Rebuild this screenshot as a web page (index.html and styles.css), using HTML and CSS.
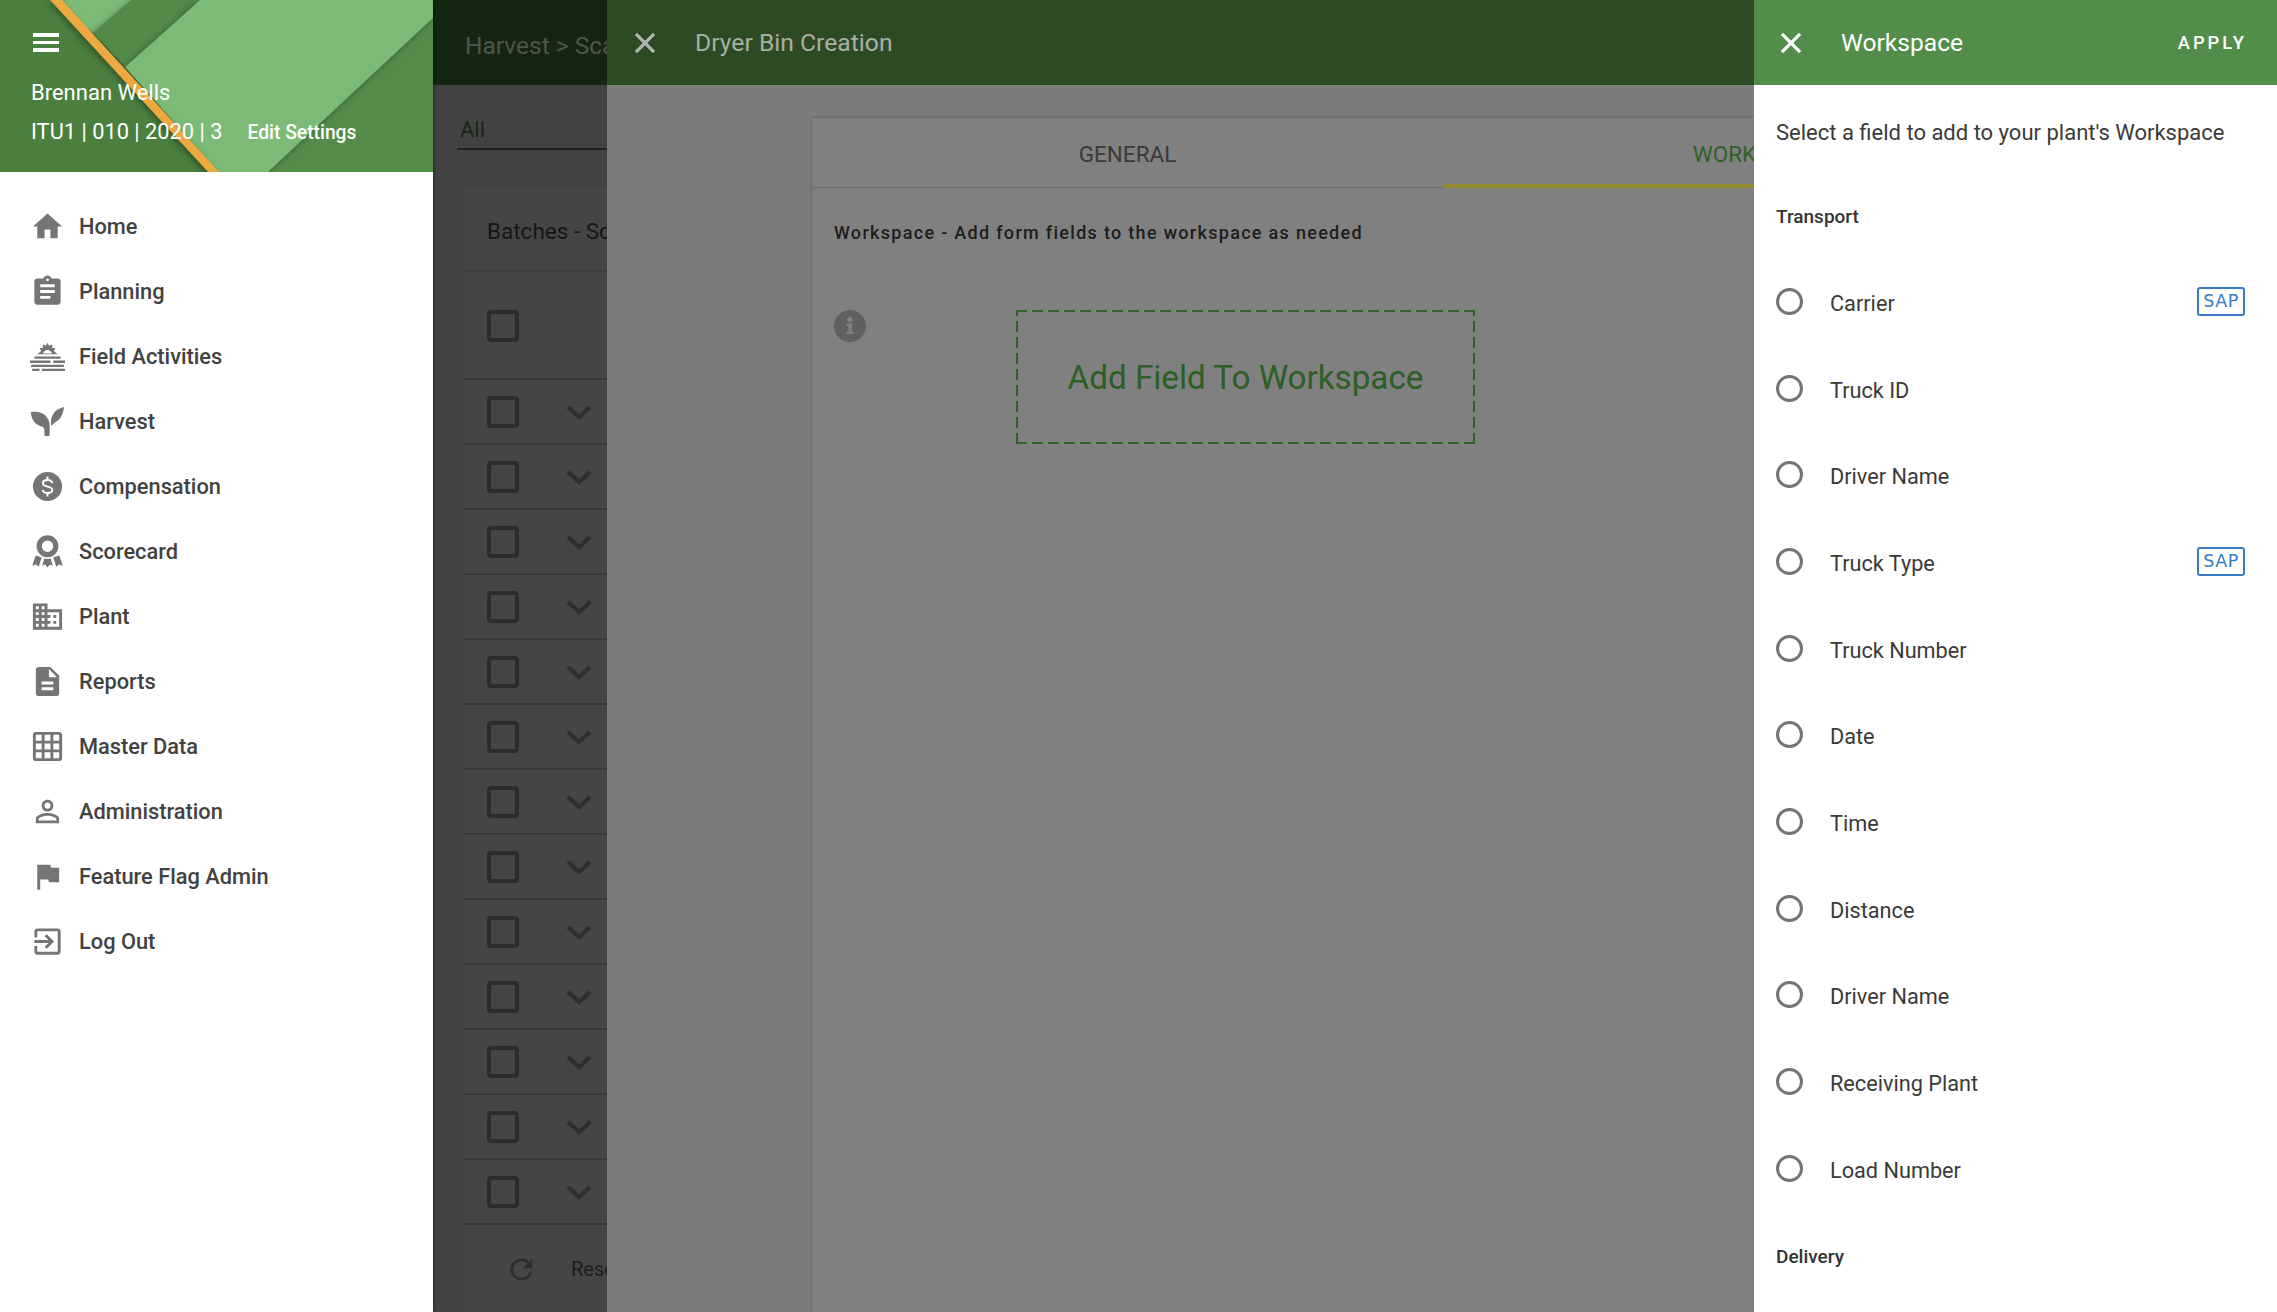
FILE: index.html
```html
<!DOCTYPE html>
<html lang="en">
<head>
<meta charset="utf-8">
<title>Dryer Bin Creation</title>
<link rel="stylesheet" href="styles.css">
</head>
<body>
<svg class="defs" width="0" height="0" aria-hidden="true">
  <symbol id="chev" viewBox="0 0 26 16"><path d="M2 3l11 10L24 3" fill="none" stroke="currentColor" stroke-width="4.200"/></symbol>
  <symbol id="close" viewBox="0 0 24 24"><path d="M19 6.410L17.590 5 12 10.590 6.410 5 5 6.410 10.590 12 5 17.590 6.410 19 12 13.410 17.590 19 19 17.590 13.410 12z" stroke="currentColor" stroke-width=".4"/></symbol>
</svg>
<div class="app">
  <aside class="sidebar">
    <header class="profile">
      <svg class="profile-art" viewBox="0 0 433 172" preserveAspectRatio="none" aria-hidden="true">
        <rect width="433" height="172" fill="#4a7f3e"/>
        <polygon points="433,18 433,172 268,172" fill="#538c48" class="shade"/>
        <polygon points="55,0 132,0 93,33" fill="#7cbb76"/>
        <polygon points="132,0 200,0 125,67 93,33" fill="#528a47" class="shade"/>
        <polygon points="200,0 433,0 433,18 268,172 218,172 125,67" fill="#7cbb76" class="shade"/>
        <polygon points="50,0 62,0 219,172 208,172" fill="#eda83f" class="shade"/>
      </svg>
      <button class="menu" type="button" aria-label="Menu"><span></span><span></span><span></span></button>
      <div class="user">Brennan Wells</div>
      <div class="plant-line"><span>ITU1 | 010 | 2020 | 3</span><a class="edit">Edit Settings</a></div>
    </header>
    <nav class="nav">
      <a class="nav-item"><svg class="ico" viewBox="0 0 24 24"><path d="M10 20v-6h4v6h5v-8h3L12 3 2 12h3v8z"/></svg>Home</a>
      <a class="nav-item"><svg class="ico" viewBox="0 0 24 24"><path d="M19 3h-4.180C14.400 1.840 13.300 1 12 1c-1.300 0-2.400.84-2.820 2H5c-1.100 0-2 .9-2 2v14c0 1.100.9 2 2 2h14c1.100 0 2-.9 2-2V5c0-1.100-.9-2-2-2zm-7 0c.55 0 1 .45 1 1s-.45 1-1 1-1-.45-1-1 .45-1 1-1zm2 14H7v-2h7v2zm3-4H7v-2h10v2zm0-4H7V7h10v2z"/></svg>Planning</a>
      <a class="nav-item"><svg class="ico" viewBox="0 0 24 24"><path d="M12 2.500l1 2.200 2.300-1-.2 2.400 2.400.1-1.200 2.100 2.700 2.200H5l2.700-2.200-1.200-2.100 2.400-.1-.2-2.400 2.300 1zM8.900 10h6.200c-.4-1.500-1.600-2.500-3.100-2.500S9.300 8.500 8.900 10z" fill-rule="evenodd"/><path d="M3 12h18v1.600H3zM0 14.800h14v1.600H0zM16 14.800h8v1.600h-8zM.8 17.600h22.400v1.600H.8zM1.500 20.400h5V22h-5zM8 20.400h16V22H8z"/></svg>Field Activities</a>
      <a class="nav-item"><svg class="ico" viewBox="0 0 24 24"><path d="M.5 5.500C5 5 9.500 6 11.500 9c1.500 2 2 4 2 6v6c0 .6-.4 1-1 1h-1.600c-.6 0-1-.4-1-1v-3c0-2-1.400-2.500-3-3C3 14 1 10 .5 5.500z"/><path d="M23.300 2c-.4 4.500-2 7.500-4.500 9.500-1.500 1.200-3 2-4.300 3.500-.3-2.500-.2-5 1-7.500C17 4.500 20 2.800 23.300 2z"/></svg>Harvest</a>
      <a class="nav-item"><svg class="ico" viewBox="0 0 24 24"><circle cx="12" cy="12" r="10"/><path d="M15.300 9.700c-.3-1.400-1.500-2.200-3.300-2.200-1.900 0-3.200 1-3.200 2.300 0 3.100 6.500 1.500 6.500 4.500 0 1.300-1.400 2.200-3.300 2.200-1.800 0-3-.8-3.300-2.200M12 5.200v2.300M12 16.500v2.300" fill="none" stroke="#fff" stroke-width="1.300"/></svg>Compensation</a>
      <a class="nav-item"><svg class="ico" viewBox="0 0 24 24"><circle cx="12" cy="8.400" r="5.700" fill="none" stroke="#757575" stroke-width="3.600"/><path d="M8 16l-2 6.500-1.900-1.600-2.600.8 2.400-7zM16 16l2 6.500 1.900-1.600 2.600.8-2.400-7zM9.800 16.800c1.400.4 3 .4 4.400 0l1.400 5-2-.9-1.600 2.100-1.600-2.100-2 .9z"/></svg>Scorecard</a>
      <a class="nav-item"><svg class="ico" viewBox="0 0 24 24"><path d="M12 7V3H2v18h20V7H12zM6 19H4v-2h2v2zm0-4H4v-2h2v2zm0-4H4V9h2v2zm0-4H4V5h2v2zm4 12H8v-2h2v2zm0-4H8v-2h2v2zm0-4H8V9h2v2zm0-4H8V5h2v2zm10 12h-8v-2h2v-2h-2v-2h2v-2h-2V9h8v10zm-2-8h-2v2h2v-2zm0 4h-2v2h2v-2z"/></svg>Plant</a>
      <a class="nav-item"><svg class="ico" viewBox="0 0 24 24"><path d="M14 2H6c-1.100 0-1.990.9-1.990 2L4 20c0 1.100.89 2 1.990 2H18c1.100 0 2-.9 2-2V8l-6-6zm2 16H8v-2h8v2zm0-4H8v-2h8v2zm-3-5V3.500L18.500 9H13z"/></svg>Reports</a>
      <a class="nav-item"><svg class="ico" viewBox="0 0 24 24"><path d="M20 2H4c-1.100 0-2 .9-2 2v16c0 1.100.9 2 2 2h16c1.100 0 2-.9 2-2V4c0-1.100-.9-2-2-2zM8 20H4v-4h4v4zm0-6H4v-4h4v4zm0-6H4V4h4v4zm6 12h-4v-4h4v4zm0-6h-4v-4h4v4zm0-6h-4V4h4v4zm6 12h-4v-4h4v4zm0-6h-4v-4h4v4zm0-6h-4V4h4v4z"/></svg>Master Data</a>
      <a class="nav-item"><svg class="ico" viewBox="0 0 24 24"><path d="M12 5.900c1.160 0 2.100.94 2.100 2.100s-.94 2.100-2.100 2.100S9.900 9.160 9.900 8s.94-2.100 2.100-2.100m0 9c2.970 0 6.100 1.460 6.100 2.100v1.100H5.900V17c0-.64 3.130-2.100 6.100-2.100M12 4C9.790 4 8 5.790 8 8s1.790 4 4 4 4-1.790 4-4-1.790-4-4-4zm0 9c-2.670 0-8 1.340-8 4v3h16v-3c0-2.660-5.330-4-8-4z"/></svg>Administration</a>
      <a class="nav-item"><svg class="ico" viewBox="0 0 24 24"><path d="M14.400 6L14 4H5v17h2v-7h5.600l.4 2h7V6z"/></svg>Feature Flag Admin</a>
      <a class="nav-item"><svg class="ico" viewBox="0 0 24 24"><path d="M10.090 15.590L11.500 17l5-5-5-5-1.410 1.410L12.670 11H3v2h9.670l-2.580 2.590zM19 3H5c-1.110 0-2 .9-2 2v4h2V5h14v14H5v-4H3v4c0 1.100.89 2 2 2h14c1.100 0 2-.9 2-2V5c0-1.100-.9-2-2-2z"/></svg>Log Out</a>
    </nav>
  </aside>

  <main class="page">
    <div class="page-bar">Harvest &gt; Scale Tickets</div>
    <div class="filter">All</div>
    <section class="batches">
      <h2 class="batches-title">Batches - Scale Tickets</h2>
      <div class="row row-head"><span class="check"></span></div>
      <div class="row"><span class="check"></span><svg class="chev"><use href="#chev"/></svg></div>
      <div class="row"><span class="check"></span><svg class="chev"><use href="#chev"/></svg></div>
      <div class="row"><span class="check"></span><svg class="chev"><use href="#chev"/></svg></div>
      <div class="row"><span class="check"></span><svg class="chev"><use href="#chev"/></svg></div>
      <div class="row"><span class="check"></span><svg class="chev"><use href="#chev"/></svg></div>
      <div class="row"><span class="check"></span><svg class="chev"><use href="#chev"/></svg></div>
      <div class="row"><span class="check"></span><svg class="chev"><use href="#chev"/></svg></div>
      <div class="row"><span class="check"></span><svg class="chev"><use href="#chev"/></svg></div>
      <div class="row"><span class="check"></span><svg class="chev"><use href="#chev"/></svg></div>
      <div class="row"><span class="check"></span><svg class="chev"><use href="#chev"/></svg></div>
      <div class="row"><span class="check"></span><svg class="chev"><use href="#chev"/></svg></div>
      <div class="row"><span class="check"></span><svg class="chev"><use href="#chev"/></svg></div>
      <div class="row"><span class="check"></span><svg class="chev"><use href="#chev"/></svg></div>
      <div class="reset">
        <svg class="reset-ico" viewBox="0 0 24 24"><path d="M17.650 6.350A7.958 7.958 0 0 0 12 4c-4.420 0-7.990 3.580-7.990 8s3.570 8 7.990 8c3.730 0 6.840-2.550 7.730-6h-2.080A5.990 5.990 0 0 1 12 18c-3.310 0-6-2.690-6-6s2.690-6 6-6c1.660 0 3.140.69 4.220 1.780L13 11h7V4l-2.350 2.350z"/></svg>
        <span>Reset</span>
      </div>
    </section>
  </main>

  <section class="modal">
    <header class="modal-bar">
      <svg class="close close-dim"><use href="#close"/></svg>
      <span>Dryer Bin Creation</span>
    </header>
    <div class="card">
      <div class="tabs">
        <div class="tab">GENERAL</div>
        <div class="tab tab-active">WORKSPACE</div>
      </div>
      <p class="card-desc">Workspace - Add form fields to the workspace as needed</p>
      <div class="card-body">
        <svg class="info" viewBox="0 0 32 32"><circle cx="16" cy="16" r="16" fill="#606060"/><circle cx="16" cy="9.500" r="2.500" fill="#808080"/><path d="M12.500 13.500h5.500v8h2v2.500h-7.500v-2.500h2v-5.500h-2z" fill="#808080"/></svg>
        <div class="dropzone">Add Field To Workspace</div>
      </div>
    </div>
  </section>

  <aside class="panel">
    <header class="panel-bar">
      <svg class="close"><use href="#close"/></svg>
      <span class="panel-title">Workspace</span>
      <span class="apply">APPLY</span>
    </header>
    <div class="panel-body">
      <p class="panel-intro">Select a field to add to your plant's Workspace</p>
      <h3 class="group">Transport</h3>
      <div class="field"><span class="radio"></span><span class="field-name">Carrier</span><span class="sap">SAP</span></div>
      <div class="field"><span class="radio"></span><span class="field-name">Truck ID</span></div>
      <div class="field"><span class="radio"></span><span class="field-name">Driver Name</span></div>
      <div class="field"><span class="radio"></span><span class="field-name">Truck Type</span><span class="sap">SAP</span></div>
      <div class="field"><span class="radio"></span><span class="field-name">Truck Number</span></div>
      <div class="field"><span class="radio"></span><span class="field-name">Date</span></div>
      <div class="field"><span class="radio"></span><span class="field-name">Time</span></div>
      <div class="field"><span class="radio"></span><span class="field-name">Distance</span></div>
      <div class="field"><span class="radio"></span><span class="field-name">Driver Name</span></div>
      <div class="field"><span class="radio"></span><span class="field-name">Receiving Plant</span></div>
      <div class="field"><span class="radio"></span><span class="field-name">Load Number</span></div>
      <h3 class="group group-next">Delivery</h3>
    </div>
  </aside>
</div>
</body>
</html>
```
FILE: styles.css
```css
* { box-sizing: border-box; }
html, body { margin: 0; height: 100%; }
body {
  font-family: Roboto, "Liberation Sans", sans-serif;
  overflow: hidden;
  background: #fff;
}
.defs { position: absolute; }
.app {
  display: flex;
  width: 2277px;
  height: 1312px;
  overflow: hidden;
}

/* Sidebar */
.sidebar {
  flex: 0 0 433px;
  background: #fff;
  box-shadow: 1px 0 3px rgba(0,0,0,.4);
  z-index: 2;
}
.profile {
  position: relative;
  height: 172px;
  padding: 33px 0 0 31px;
  color: #fff;
  overflow: hidden;
}
.profile-art { position: absolute; left: 0; top: 0; width: 100%; height: 100%; }
.shade { filter: drop-shadow(-2px 2px 3px rgba(0,0,0,.35)); }
.menu {
  position: relative;
  display: flex;
  flex-direction: column;
  gap: 4px;
  width: 26px;
  padding: 0;
  margin: 0 0 0 2px;
  border: 0;
  background: none;
}
.menu span { display: block; height: 3.500px; background: #fff; }
.user {
  position: relative;
  margin-top: 27px;
  font-size: 22px;
  line-height: 28px;
}
.plant-line {
  position: relative;
  display: flex;
  align-items: baseline;
  gap: 25px;
  margin-top: 11px;
  font-size: 21.800px;
  line-height: 28px;
}
.edit { font-size: 19.300px; font-weight: 500; }
.nav { padding-top: 22px; }
.nav-item {
  display: flex;
  align-items: center;
  height: 65px;
  padding-left: 30px;
  gap: 14px;
  font-size: 21.800px;
  font-weight: 500;
  color: #424242;
}
.ico { flex: 0 0 35px; width: 35px; height: 35px; fill: #757575; }

/* Background page */
.page {
  flex: 0 0 174px;
  overflow: hidden;
  background: #424242;
}
.page-bar {
  display: flex;
  align-items: center;
  height: 85px;
  padding: 5px 0 0 32px;
  background: #14260f;
  font-size: 24.500px;
  color: #4c5749;
  white-space: nowrap;
}
.filter {
  width: 400px;
  height: 65px;
  margin-left: 24px;
  padding: 32px 0 0 3px;
  border-bottom: 2px solid #1a2418;
  font-size: 22px;
  line-height: 26px;
  color: #1a2617;
}
.batches {
  width: 800px;
  height: 1300px;
  margin: 37px 0 0 31px;
  background: #454545;
}
.batches-title {
  display: flex;
  align-items: center;
  height: 85px;
  margin: 0;
  padding: 4px 0 0 23px;
  font-size: 22.500px;
  font-weight: 400;
  color: #161616;
  border-bottom: 2px solid #3d3d3d;
  white-space: nowrap;
}
.row {
  display: flex;
  align-items: center;
  height: 65px;
  padding-left: 23px;
  gap: 47px;
  border-bottom: 2px solid #383838;
}
.row-head { height: 108px; padding-top: 2px; }
.check {
  flex: 0 0 32px;
  height: 32px;
  border: 4px solid #2c2c2c;
  border-radius: 4px;
}
.chev { width: 26px; height: 16px; color: #2e2e2e; }
.reset {
  display: flex;
  align-items: center;
  gap: 33px;
  height: 88px;
  padding-left: 41px;
  font-size: 20px;
  color: #1c1c1c;
}
.reset-ico { flex: 0 0 33px; width: 33px; height: 33px; fill: #2e2e2e; }

/* Modal */
.modal {
  flex: 0 0 1147px;
  overflow: hidden;
  background: #7c7c7c;
}
.modal-bar {
  display: flex;
  align-items: center;
  height: 85px;
  padding-left: 21px;
  gap: 33px;
  background: #2d4a24;
  font-size: 24.700px;
  color: #a8b0a5;
}
.close { width: 34px; height: 34px; fill: #fff; color: #fff; flex: 0 0 34px; }
.close-dim { fill: #b0b5ae; color: #b0b5ae; }
.card {
  width: 1262px;
  height: 1300px;
  margin: 33px 0 0 205px;
  background: #808080;
  box-shadow: 0 0 3px rgba(0,0,0,.3);
}
.tabs {
  display: flex;
  height: 70px;
  border-bottom: 1px solid #6d6d6d;
}
.tab {
  flex: 1;
  display: flex;
  align-items: center;
  justify-content: center;
  padding-top: 2px;
  font-size: 22.500px;
  color: #3a3a3a;
}
.tab-active {
  color: #2f6227;
  height: 70px;
  padding-top: 6px;
  border-bottom: 4px solid #948a2e;
}
.card-desc {
  margin: 34px 0 0 22px;
  font-size: 18px;
  font-weight: 500;
  line-height: 22px;
  letter-spacing: 1.300px;
  color: #1d1d1d;
}
.card-body {
  display: flex;
  align-items: flex-start;
  margin: 66px 0 0 22px;
}
.info { flex: 0 0 32px; width: 32px; height: 32px; }
.dropzone {
  display: flex;
  align-items: center;
  justify-content: center;
  width: 459px;
  height: 134px;
  margin-left: 150px;
  background-image:
    repeating-linear-gradient(90deg, #31622a 0 11px, transparent 11px 16px),
    repeating-linear-gradient(90deg, #31622a 0 11px, transparent 11px 16px),
    repeating-linear-gradient(0deg, #31622a 0 11px, transparent 11px 16px),
    repeating-linear-gradient(0deg, #31622a 0 11px, transparent 11px 16px);
  background-size: 100% 2px, 100% 2px, 2px 100%, 2px 100%;
  background-position: top, bottom, left, right;
  background-repeat: no-repeat;
  font-size: 33.200px;
  color: #2c5f25;
}

/* Right panel */
.panel {
  flex: 0 0 523px;
  background: #fff;
  z-index: 2;
}
.panel-bar {
  display: flex;
  align-items: center;
  height: 85px;
  padding: 0 30px 0 20px;
  background: #528e4a;
  color: #fff;
}
.panel-title { margin-left: 33px; font-size: 24.600px; }
.apply {
  margin-left: auto;
  font-size: 18.300px;
  font-weight: 500;
  letter-spacing: 3px;
}
.panel-body { padding: 0 32px 0 22px; }
.panel-intro {
  margin: 34px 0 0;
  font-size: 22px;
  line-height: 28px;
  color: #3a3a3a;
}
.group {
  margin: 58px 0 0;
  font-size: 19px;
  font-weight: 500;
  line-height: 24px;
  color: #333;
}
.group-next { margin-top: 33px; }
.group + .field { margin-top: 29px; }
.field {
  display: flex;
  align-items: center;
  height: 86.700px;
}
.radio {
  flex: 0 0 27px;
  height: 27px;
  border: 3px solid #757575;
  border-radius: 50%;
}
.field-name {
  margin-left: 27px;
  padding-top: 4px;
  font-size: 21.700px;
  color: #3a3a3a;
}
.sap {
  display: flex;
  align-items: center;
  justify-content: center;
  width: 48px;
  height: 29px;
  margin-left: auto;
  border: 2.500px solid #3a7ac8;
  border-radius: 3px;
  font-family: "DejaVu Sans", sans-serif;
  font-size: 17.500px;
  letter-spacing: .5px;
  color: #3a7ac8;
}
```
